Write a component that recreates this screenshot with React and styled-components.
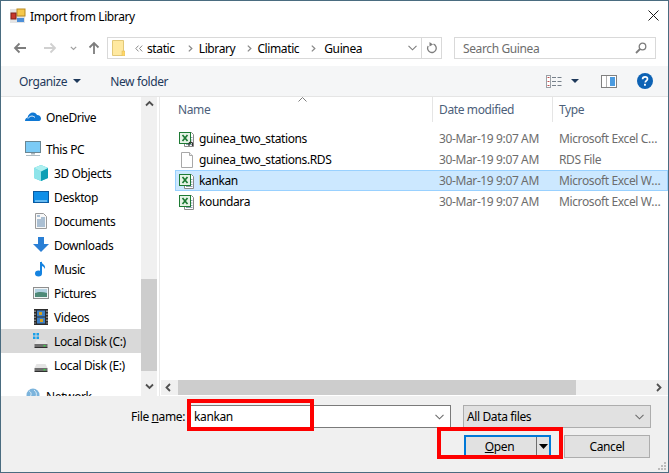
import React from 'react';
import styled, { createGlobalStyle } from 'styled-components';

const GlobalStyle = createGlobalStyle`
  html, body { margin: 0; padding: 0; background: #fff; }
  * { box-sizing: border-box; }
`;

const Window = styled.div`
  position: relative;
  width: 669px;
  height: 473px;
  border: 1px solid #4a6c80;
  background: #fff;
  display: flex;
  flex-direction: column;
  overflow: hidden;
  font-family: "Noto Sans", "Open Sans", sans-serif;
  font-size: 12px;
  letter-spacing: -0.38px;
  color: #000;
`;

const TitleBar = styled.div`
  height: 29px;
  display: flex;
  align-items: center;
  padding: 0 9px 0 9px;
  flex: none;
`;

const TitleText = styled.span`
  margin-left: 4px;
  flex: 1;
  margin-top: 1px;
`;

const NavBar = styled.div`
  height: 36px;
  flex: none;
  display: flex;
  align-items: flex-start;
  padding: 7px 12px 0 12px;
`;

const NavIcons = styled.div`
  display: flex;
  align-items: center;
  width: 94px;
  height: 22px;
`;

const NavIcon = styled.span`
  display: flex;
  margin-left: ${p => p.$gap || 0}px;
`;

const AddressBox = styled.div`
  width: 335px;
  height: 22px;
  border: 1px solid #d9d9d9;
  display: flex;
  align-items: center;
  padding-left: 4px;
`;

const Crumb = styled.span`
  margin-left: ${p => p.$gap}px;
`;

const AddressEnd = styled.div`
  margin-left: auto;
  display: flex;
  align-items: center;
  height: 100%;
`;

const RefreshCell = styled.div`
  width: 20px;
  height: 100%;
  margin-left: 4px;
  border-left: 1px solid #d9d9d9;
  display: flex;
  align-items: center;
  justify-content: center;
`;

const SearchBox = styled.div`
  width: 202px;
  height: 22px;
  margin-left: 12px;
  border: 1px solid #d9d9d9;
  display: flex;
  align-items: center;
  justify-content: space-between;
  padding: 0 8px;
  color: #6d6d6d;
`;

const Toolbar = styled.div`
  height: 31px;
  flex: none;
  background: #f5f6f7;
  border-bottom: 1px solid #e5e5e5;
  display: flex;
  align-items: center;
  padding: 0 15px 0 18px;
  color: #1e395b;
`;

const ToolLabel = styled.span`
  margin-right: ${p => p.$gap}px;
`;

const ToolRight = styled.div`
  margin-left: auto;
  display: flex;
  align-items: center;
`;

const ToolIcon = styled.span`
  display: flex;
  margin-left: ${p => p.$gap || 0}px;
`;

const Main = styled.div`
  height: 299px;
  flex: none;
  display: flex;
`;

const Sidebar = styled.div`
  width: 140px;
  flex: none;
  padding-top: 8px;
  overflow: hidden;
`;

const NavRow = styled.div`
  height: 24px;
  flex: none;
  display: flex;
  align-items: center;
  gap: 5px;
  padding-left: ${p => (p.$child ? 32 : 24)}px;
  margin-top: ${p => p.$top || 0}px;
  background: ${p => (p.$active ? '#d9d9d9' : 'transparent')};
  white-space: nowrap;
`;

const IconSlot = styled.span`
  width: 16px;
  height: 16px;
  flex: none;
  display: flex;
`;

const VScroll = styled.div`
  width: 16px;
  flex: none;
  background: #f0f0f0;
  display: flex;
  flex-direction: column;
  align-items: center;
  padding-top: 3px;
`;

const VThumb = styled.div`
  width: 16px;
  height: 92px;
  margin-top: 170px;
  margin-bottom: 12px;
  background: #cdcdcd;
`;

const Files = styled.div`
  flex: 1;
  min-width: 0;
  margin-left: 2px;
  border-left: 1px solid #e9e9e9;
  display: flex;
  flex-direction: column;
  position: relative;
`;

const HeaderRow = styled.div`
  height: 25px;
  flex: none;
  display: flex;
  color: #4c607a;
`;

const HeaderCell = styled.div`
  width: ${p => p.$w}px;
  padding-left: ${p => p.$pad}px;
  display: flex;
  align-items: center;
  border-right: ${p => (p.$last ? 'none' : '1px solid #e5e5e5')};
  flex: ${p => (p.$last ? 1 : 'none')};
`;

const SortCaret = styled.svg`
  position: absolute;
  left: 138px;
  top: 0;
`;

const FileList = styled.div`
  flex: 1;
  padding: 6px 0 0 15px;
`;

const FileRow = styled.div`
  height: 21px;
  display: flex;
  align-items: center;
  padding-left: 3px;
  border: 1px solid ${p => (p.$selected ? '#99d1ff' : 'transparent')};
  background: ${p => (p.$selected ? '#cce8ff' : 'transparent')};
`;

const NameCell = styled.div`
  width: 240px;
  margin-left: 4px;
  flex: none;
  white-space: nowrap;
`;

const DateCell = styled.div`
  width: 120px;
  flex: none;
  color: #6d6d6d;
`;

const TypeCell = styled.div`
  flex: 1;
  min-width: 0;
  padding-right: 4px;
  color: #6d6d6d;
  white-space: nowrap;
  overflow: hidden;
  text-overflow: ellipsis;
`;

const HScroll = styled.div`
  height: 15px;
  flex: none;
  margin: 0 0 1px 1px;
  background: #f0f0f0;
  display: flex;
  align-items: center;
  padding: 0 4px;
`;

const HThumb = styled.div`
  width: 398px;
  height: 15px;
  margin-left: 4px;
  margin-right: auto;
  background: #cdcdcd;
`;

const Footer = styled.div`
  flex: 1;
  background: #f0f0f0;
  padding-top: 9px;
  position: relative;
`;

const FieldRow = styled.div`
  display: flex;
  justify-content: flex-end;
  align-items: center;
  height: 23px;
  padding-right: 17px;
`;

const FieldLabel = styled.label`
  margin-right: 3px;
  u { text-decoration: underline; }
`;

const NameInput = styled.div`
  width: 263px;
  height: 23px;
  background: #fff;
  border: 1px solid #7a7a7a;
  display: flex;
  align-items: center;
  justify-content: space-between;
  padding: 0 6px 0 5px;
`;

const TypeSelect = styled.div`
  width: 188px;
  height: 23px;
  margin-left: 12px;
  background: #e1e1e1;
  border: 1px solid #adadad;
  display: flex;
  align-items: center;
  justify-content: space-between;
  padding: 0 6px 0 3px;
`;

const ButtonRow = styled.div`
  display: flex;
  justify-content: flex-end;
  margin-top: 7px;
  padding-right: 18px;
  gap: 13px;
`;

const OpenButton = styled.div`
  width: 87px;
  height: 23px;
  background: #e1e1e1;
  border: 2px solid #0078d7;
  display: flex;
  align-items: center;
`;

const OpenLabel = styled.span`
  flex: 1;
  text-align: center;
  padding-right: 3px;
`;

const SplitArrow = styled.div`
  width: 13px;
  height: 100%;
  border-left: 1px solid #6e6e6e;
  display: flex;
  align-items: center;
  justify-content: center;
`;

const CancelButton = styled.div`
  width: 86px;
  height: 23px;
  background: #e1e1e1;
  border: 1px solid #adadad;
  display: flex;
  align-items: center;
  justify-content: center;
`;

const Grip = styled.svg`
  position: absolute;
  right: 1px;
  bottom: 1px;
`;

// the red annotation boxes drawn on top of the dialog
const Callout = styled.div`
  position: absolute;
  left: ${p => p.$x}px;
  top: ${p => p.$y}px;
  width: ${p => p.$w}px;
  height: ${p => p.$h}px;
  border: 4px solid #fe0000;
  pointer-events: none;
`;

const Svg = ({ w = 16, h = 16, children }) => (
  <svg width={w} height={h} viewBox={`0 0 ${w} ${h}`} style={{ flex: 'none', display: 'block' }}>{children}</svg>
);

const AppIcon = () => (
  <Svg>
    <rect x="0" y="1" width="15" height="14" fill="#e4e4e4" />
    <rect x="7" y="1" width="8" height="7" fill="#f6c84c" stroke="#b98a20" />
    <rect x="1" y="5" width="5" height="6" fill="#c8362a" stroke="#7f2018" />
    <rect x="7" y="10" width="7" height="4" fill="#4d8fd8" />
  </Svg>
);

const CloseIcon = () => (
  <Svg w={11} h={11}><path d="M.5.5l10 10M10.500.5l-10 10" stroke="#1a1a1a" fill="none" /></Svg>
);

const BackIcon = ({ color }) => (
  <Svg w={14} h={12}><path d="M13 6H2M6.500 1.500L2 6l4.500 4.500" stroke={color} strokeWidth="1.800" fill="none" /></Svg>
);

const ForwardIcon = ({ color }) => (
  <Svg w={14} h={12}><path d="M1 6h11M7.500 1.500L12 6l-4.500 4.500" stroke={color} strokeWidth="1.800" fill="none" /></Svg>
);

const UpIcon = () => (
  <Svg w={12} h={14}><path d="M6 13V2M1.500 6.500L6 2l4.500 4.500" stroke="#7d7d7d" strokeWidth="1.800" fill="none" /></Svg>
);

const Chevron = ({ color = '#8a8a8a' }) => (
  <Svg w={7} h={5}><path d="M.8.800L3.500 3.500 6.200.8" stroke={color} strokeWidth="1.200" fill="none" /></Svg>
);

const WideChevron = ({ color = '#6d6d6d' }) => (
  <Svg w={9} h={6}><path d="M.5.800l4 4 4-4" stroke={color} fill="none" strokeWidth="1.100" /></Svg>
);

const CrumbArrow = () => (
  <Svg w={5} h={7}><path d="M.8.600L3.800 3.500.8 6.400" stroke="#8a8a8a" strokeWidth="1.300" fill="none" /></Svg>
);

const DoubleArrow = () => (
  <Svg w={8} h={7}><path d="M3.500.600L.8 3.500l2.700 2.900M7.200.6L4.500 3.500l2.700 2.900" stroke="#8a8a8a" fill="none" /></Svg>
);

const FolderIcon = () => (
  <Svg w={13} h={16}>
    <path d="M.5.500h11v15H.5z" fill="#ffe9a0" stroke="#e2c878" />
    <rect x="10" y="11" width="3" height="5" fill="#ffd767" stroke="#d9b75c" strokeWidth=".5" />
  </Svg>
);

const RefreshIcon = () => (
  <Svg w={11} h={12}>
    <path d="M7.500 2.200A4.300 4.300 0 1 1 2.200 4" stroke="#7d7d7d" strokeWidth="1.300" fill="none" />
    <path d="M3.500 0v4.500L7 2.400z" fill="#7d7d7d" />
  </Svg>
);

const MagnifierIcon = () => (
  <Svg w={12} h={12}>
    <circle cx="7.500" cy="4.500" r="3.300" stroke="#7d7d7d" strokeWidth="1.300" fill="none" />
    <path d="M5 7L1 11" stroke="#7d7d7d" strokeWidth="1.800" />
  </Svg>
);

const Caret = ({ color = '#1e395b' }) => (
  <Svg w={8} h={4}><path d="M0 0h8L4 4z" fill={color} /></Svg>
);

const SplitCaret = () => (
  <Svg w={9} h={5}><path d="M0 0h9L4.500 5z" fill="#000" /></Svg>
);

const ViewIcon = () => (
  <Svg w={17} h={13}>
    <rect x=".5" y=".5" width="4" height="12" fill="#fff" stroke="#9aa0a6" />
    <path d="M1.500 2.500h2M1.500 6.500h2M1.500 10.500h2" stroke="#c05050" />
    <path d="M6 2.500h4M11.500 2.500h4M6 6.500h4M11.500 6.500h4M6 10.500h4M11.500 10.500h4" stroke="#76808a" />
  </Svg>
);

const PaneIcon = () => (
  <Svg w={16} h={13}>
    <rect x=".5" y=".5" width="15" height="12" fill="#fff" stroke="#808080" />
    <rect x="9" y="2" width="5" height="9" fill="#4b9be0" />
    <path d="M5.500 1v11" stroke="#b0b0b0" />
  </Svg>
);

const HelpIcon = () => (
  <svg width="16" height="16" viewBox="0 0 16 16" style={{ display: 'block' }}>
    <circle cx="8" cy="8" r="8" fill="#0d62b4" />
    <path d="M5.600 6.200c0-1.500 1-2.400 2.500-2.400s2.400.8 2.400 2.100c0 1.800-2.200 1.800-2.200 3.700" stroke="#fff" strokeWidth="1.700" fill="none" />
    <rect x="7" y="10.800" width="1.900" height="1.900" fill="#fff" />
  </svg>
);

const CloudIcon = () => (
  <Svg>
    <path d="M0 12c0-2 1-3 2.500-3.300C3 5.500 5.500 3.500 8 3.500c2 0 3.300 1 4 2.500 2.500 0 4 1.700 4 3.500 0 1.600-.8 2.500-2 2.500z" fill="#0f78d4" />
    <path d="M3 9.500c2-3 5-3 7-1" stroke="#fff" strokeWidth="1" fill="none" />
  </Svg>
);

const PcIcon = () => (
  <Svg>
    <rect x=".5" y=".5" width="15" height="11" fill="#7ccbf6" stroke="#6a8794" />
    <path d="M6 12h4v1.500H6z" fill="#a8b4ba" />
    <path d="M1 14.500h14" stroke="#aebbc2" />
  </Svg>
);

const CubeIcon = () => (
  <Svg>
    <path d="M8 0l7 3v10l-7 3-7-3V3z" fill="#3cc6d6" />
    <path d="M8 6.500L1 3v10l7 3z" fill="#8ee4ea" />
    <path d="M8 6.500L15 3v10l-7 3z" fill="#0d9fb5" />
    <path d="M8 0l7 3-7 3.500L1 3z" fill="#aef0f0" />
  </Svg>
);

const DesktopIcon = () => (
  <Svg>
    <rect x=".5" y="2.500" width="15" height="11" fill="#0f8fe8" stroke="#0a5aa0" />
    <path d="M2 12h12" stroke="#bfe6fb" />
  </Svg>
);

const DocsIcon = () => (
  <Svg>
    <path d="M2.500.500h8l3 3v12h-11z" fill="#f8f8f8" stroke="#9a9a9a" />
    <path d="M4 3h3M8 5h4M4 7h8M4 9h8M4 11h8M4 13h8" stroke="#5f87ae" />
  </Svg>
);

const DownloadIcon = () => (
  <Svg>
    <path d="M5 0h6v7h5l-8 8-8-8h5z" fill="#2a7fd5" />
  </Svg>
);

const MusicIcon = () => (
  <Svg>
    <path d="M8 1v11" stroke="#1583e0" strokeWidth="2" />
    <ellipse cx="5.500" cy="12.500" rx="3.500" ry="3" fill="#1583e0" />
    <path d="M8 0c.5 3 5 3.500 4 8-1-2.500-3-3-4-3.500z" fill="#1583e0" />
  </Svg>
);

const PictureIcon = () => (
  <Svg>
    <rect x=".5" y="2.500" width="15" height="11" fill="#f2f5f6" stroke="#8e8e8e" />
    <rect x="2" y="4" width="12" height="4" fill="#b5d2e2" />
    <path d="M2 8c3-1.500 8-1.500 12 0v4H2z" fill="#4f8a78" />
  </Svg>
);

const VideoIcon = () => (
  <Svg>
    <rect x="1" y="0" width="14" height="16" fill="#2c2c2c" />
    <rect x="4" y="1.500" width="8" height="6" fill="#3d7fc4" />
    <rect x="4" y="8.500" width="8" height="6" fill="#3d7fc4" />
    <rect x="6" y="3" width="3" height="3" fill="#d4a020" />
    <rect x="7" y="10" width="3" height="3" fill="#d4a020" />
    <path d="M2 1.500v13M14 1.500v13" stroke="#d8d8d8" strokeDasharray="1.500 1.500" />
  </Svg>
);

const DiskIcon = ({ windows }) => (
  <Svg>
    {windows && (
      <g fill="#19a0ea">
        <rect x="0" y="0" width="2.500" height="2.500" />
        <rect x="3.500" y="0" width="2.500" height="2.500" />
        <rect x="0" y="3.500" width="2.500" height="2.500" />
        <rect x="3.500" y="3.500" width="2.500" height="2.500" />
      </g>
    )}
    <path d="M1.500 11L3.500 7h9l2 4z" fill="#e4e4e4" />
    <rect x="1.500" y="11" width="13" height="3" fill="#6f6f6f" />
    <rect x="1.500" y="14" width="13" height="1" fill="#2f2f2f" />
    <rect x="10.500" y="12" width="2" height="1.500" fill="#3fd24a" />
  </Svg>
);

const GlobeIcon = () => (
  <Svg>
    <circle cx="8" cy="7" r="6.500" fill="#7cb4dc" />
    <path d="M4 3c2 1 3 3 1 6M9 2c2 2 3 3 2 7" stroke="#dfeef8" fill="none" />
    <rect x="0" y="11" width="16" height="3" fill="#3a88c8" />
  </Svg>
);

const SheetIcon = ({ linked }) => (
  <Svg>
    <path d="M5.500 1.500h7l2 2v12h-9z" fill="#fff" stroke="#8a8a8a" />
    <path d="M12 6.500h1.500M12 9h1.500M12 11.500h1.500M7 13.500h6.500" stroke="#8f9fb0" />
    <rect x=".5" y="1.500" width="11" height="11" fill="#e6f3e6" stroke="#1e7a34" />
    <path d="M3.500 4l5 6M8.500 4l-5 6" stroke="#1e7a34" strokeWidth="1.700" />
    {linked && <path d="M10 15v-2.500a1.800 1.800 0 0 1 3.500 0V15" stroke="#333" strokeWidth="1.200" fill="none" />}
  </Svg>
);

const BlankIcon = () => (
  <Svg>
    <path d="M2.500.500h8l3 3v12h-11z" fill="#fff" stroke="#a8a8a8" />
    <path d="M10.500.500v3h3" fill="#f0f0f0" stroke="#a8a8a8" />
  </Svg>
);

const ArrowGlyph = ({ dir }) => {
  const paths = {
    up: 'M1 5.500L4.500 2 8 5.500',
    down: 'M1 1.500L4.500 5 8 1.500',
    left: 'M5 1L1.500 4.500 5 8',
    right: 'M2 1l3.500 3.500L2 8',
  };
  return <Svg w={9} h={9}><path d={paths[dir]} stroke="#505050" strokeWidth="1.800" fill="none" /></Svg>;
};

const places = [
  { label: '3D Objects', icon: <CubeIcon /> },
  { label: 'Desktop', icon: <DesktopIcon /> },
  { label: 'Documents', icon: <DocsIcon /> },
  { label: 'Downloads', icon: <DownloadIcon /> },
  { label: 'Music', icon: <MusicIcon /> },
  { label: 'Pictures', icon: <PictureIcon /> },
  { label: 'Videos', icon: <VideoIcon /> },
  { label: 'Local Disk (C:)', icon: <DiskIcon windows />, active: true },
  { label: 'Local Disk (E:)', icon: <DiskIcon /> },
];

const files = [
  { name: 'guinea_two_stations', type: 'Microsoft Excel Comma Separated', icon: <SheetIcon linked /> },
  { name: 'guinea_two_stations.RDS', type: 'RDS File', icon: <BlankIcon /> },
  { name: 'kankan', type: 'Microsoft Excel Worksheet', icon: <SheetIcon />, selected: true },
  { name: 'koundara', type: 'Microsoft Excel Worksheet', icon: <SheetIcon /> },
];

export default function App() {
  return (
    <Window>
      <GlobalStyle />
      <TitleBar>
        <AppIcon />
        <TitleText>Import from Library</TitleText>
        <CloseIcon />
      </TitleBar>

      <NavBar>
        <NavIcons>
          <NavIcon><BackIcon color="#7d7d7d" /></NavIcon>
          <NavIcon $gap={16}><ForwardIcon color="#d0d0d0" /></NavIcon>
          <NavIcon $gap={13}><Chevron color="#a0a0a0" /></NavIcon>
          <NavIcon $gap={11}><UpIcon /></NavIcon>
        </NavIcons>
        <AddressBox>
          <FolderIcon />
          <Crumb $gap={10}><DoubleArrow /></Crumb>
          <Crumb $gap={4}>static</Crumb>
          <Crumb $gap={13}><CrumbArrow /></Crumb>
          <Crumb $gap={6}>Library</Crumb>
          <Crumb $gap={12}><CrumbArrow /></Crumb>
          <Crumb $gap={5}>Climatic</Crumb>
          <Crumb $gap={12}><CrumbArrow /></Crumb>
          <Crumb $gap={8}>Guinea</Crumb>
          <AddressEnd>
            <WideChevron color="#7d7d7d" />
            <RefreshCell><RefreshIcon /></RefreshCell>
          </AddressEnd>
        </AddressBox>
        <SearchBox>
          <span>Search Guinea</span>
          <MagnifierIcon />
        </SearchBox>
      </NavBar>

      <Toolbar>
        <ToolLabel $gap={6}>Organize</ToolLabel>
        <ToolLabel $gap={29}><Caret /></ToolLabel>
        <ToolLabel $gap={0}>New folder</ToolLabel>
        <ToolRight>
          <ToolIcon><ViewIcon /></ToolIcon>
          <ToolIcon $gap={8}><Caret /></ToolIcon>
          <ToolIcon $gap={22}><PaneIcon /></ToolIcon>
          <ToolIcon $gap={20}><HelpIcon /></ToolIcon>
        </ToolRight>
      </Toolbar>

      <Main>
        <Sidebar>
          <NavRow>
            <IconSlot><CloudIcon /></IconSlot>
            OneDrive
          </NavRow>
          <NavRow $top={8}>
            <IconSlot><PcIcon /></IconSlot>
            This PC
          </NavRow>
          {places.map(place => (
            <NavRow key={place.label} $child $active={place.active}>
              <IconSlot>{place.icon}</IconSlot>
              {place.label}
            </NavRow>
          ))}
          <NavRow $top={7}>
            <IconSlot><GlobeIcon /></IconSlot>
            Network
          </NavRow>
        </Sidebar>
        <VScroll>
          <ArrowGlyph dir="up" />
          <VThumb />
          <ArrowGlyph dir="down" />
        </VScroll>
        <Files>
          <SortCaret width="9" height="5" viewBox="0 0 9 5">
            <path d="M.5 4.500l4-4 4 4" stroke="#7d7d7d" fill="none" />
          </SortCaret>
          <HeaderRow>
            <HeaderCell $w={273} $pad={18}>Name</HeaderCell>
            <HeaderCell $w={120} $pad={6}>Date modified</HeaderCell>
            <HeaderCell $last $pad={6}>Type</HeaderCell>
          </HeaderRow>
          <FileList>
            {files.map(file => (
              <FileRow key={file.name} $selected={file.selected}>
                <IconSlot>{file.icon}</IconSlot>
                <NameCell>{file.name}</NameCell>
                <DateCell>30-Mar-19 9:07 AM</DateCell>
                <TypeCell>{file.type}</TypeCell>
              </FileRow>
            ))}
          </FileList>
          <HScroll>
            <ArrowGlyph dir="left" />
            <HThumb />
            <ArrowGlyph dir="right" />
          </HScroll>
        </Files>
      </Main>

      <Footer>
        <FieldRow>
          <FieldLabel>File <u>n</u>ame:</FieldLabel>
          <NameInput>
            kankan
            <WideChevron />
          </NameInput>
          <TypeSelect>
            All Data files
            <WideChevron />
          </TypeSelect>
        </FieldRow>
        <ButtonRow>
          <OpenButton>
            <OpenLabel><u>O</u>pen</OpenLabel>
            <SplitArrow><SplitCaret /></SplitArrow>
          </OpenButton>
          <CancelButton>Cancel</CancelButton>
        </ButtonRow>
        <Grip width="10" height="10" viewBox="0 0 10 10">
          <path d="M7 1h2v2H7zM4 4h2v2H4zM7 4h2v2H7zM1 7h2v2H1zM4 7h2v2H4zM7 7h2v2H7z" fill="#bcbcbc" />
        </Grip>
      </Footer>

      <Callout $x={186} $y={398} $w={127} $h={32} />
      <Callout $x={436} $y={426} $w={126} $h={32} />
    </Window>
  );
}
